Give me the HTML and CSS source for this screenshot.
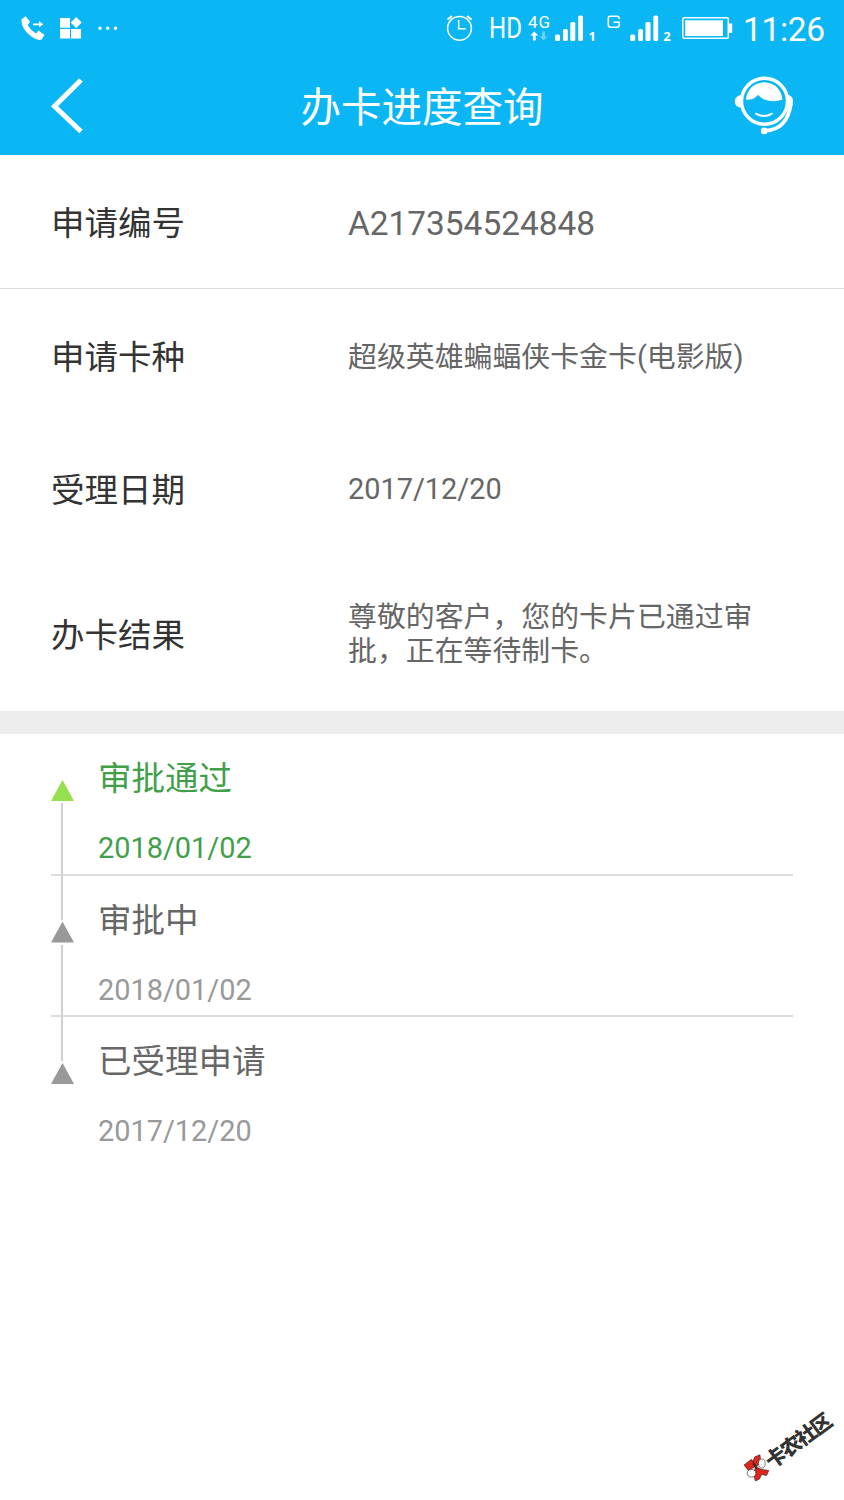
FILE: index.html
```html
<!DOCTYPE html>
<html lang="zh-CN">
<head>
<meta charset="utf-8">
<title>办卡进度查询</title>
<link rel="stylesheet" href="styles.css">
</head>
<body>
<header class="top">
  <div class="status">
    <svg class="status-left" width="130" height="56" viewBox="0 0 130 56" fill="#fff">
      <path d="M21.300 19.500L25.500 16.200L30 21.500L27.700 25.200Q31 30.500 36 33.500L38.500 30.500L44.500 35L41.500 39.500Q38 41 32 37Q21.500 30 21.300 19.500Z"/>
      <path d="M33 23.500h6v-2.500l4.200 3.300-4.200 3.300v-2.400h-6z"/>
      <path d="M60 18h10v9.700H60zM60 29h10v9.500H60zM71 29h10v9.500H71zM76.200 17l5.500 5.500-5.500 5.500-5.500-5.500z"/>
      <circle cx="100" cy="28.300" r="1.700"/><circle cx="107.700" cy="28.300" r="1.700"/><circle cx="115.500" cy="28.300" r="1.700"/>
    </svg>
    <svg class="status-right" width="404" height="56" viewBox="440 0 404 56" fill="#fff">
      <g fill="none" stroke="#fff" stroke-width="1.500">
        <circle cx="459.500" cy="28.300" r="11.900"/>
        <path d="M458.700 20v8.800h7"/>
        <path d="M447.500 19.500l4.500-3.500M471.500 19.500l-4.500-3.500" stroke-width="2"/>
      </g>
      <text class="st-hd" x="489" y="38.200" textLength="33" lengthAdjust="spacingAndGlyphs">HD</text>
      <text class="st-net" x="528" y="28" textLength="22">4G</text>
      <path d="M534.300 31.500l4 4h-2.600v5h-2.800v-5h-2.600z"/>
      <path d="M543.500 40.500l4-4h-2.600v-5h-2.800v5h-2.600z" opacity=".4"/>
      <g id="bars"><rect x="555" y="34.500" width="5" height="6.500" rx="1.500"/><rect x="563" y="29" width="4.800" height="12" rx="1.500"/><rect x="570.300" y="22" width="5" height="19" rx="1.500"/><rect x="578.200" y="15.500" width="4.800" height="25.500" rx="1.500"/></g>
      <text class="st-sim" x="588.500" y="41">1</text>
      <path d="M619.200 19v-.5q0-2.200-2.200-2.200h-6.500q-2.200 0-2.200 2.200v6.500q0 2.200 2.200 2.200h6.500q2.200 0 2.200-2.200v-2.800h-5.700" fill="none" stroke="#fff" stroke-width="1.600"/>
      <use href="#bars" x="75.200"/>
      <text class="st-sim" x="663.200" y="41">2</text>
      <rect x="682.800" y="17.800" width="45.500" height="20.500" rx="1.500" fill="none" stroke="#fff" stroke-width="1.500"/>
      <path d="M685.200 20.300h37.800v15.700h-37.800zM729 23.500h3.200v9.300H729z"/>
      <text class="st-time" x="743" y="41" textLength="82">11:26</text>
    </svg>
  </div>
  <nav class="nav">
    <svg class="back" width="36" height="58" viewBox="49 77 36 58"><path d="M81 80L54.500 106.300L81 131.500" fill="none" stroke="#fff" stroke-width="5"/></svg>
    <h1 class="title">办卡进度查询</h1>
    <svg class="service" width="62" height="60" viewBox="733 75.800 62 60" fill="none" stroke="#fff">
      <path d="M742 94.500Q734.800 95.500 734.800 101.300T742 107.500zM787 94.500q6 .5 6 6.500t-6 7z" fill="#fff" stroke="none"/>
      <circle cx="764.500" cy="101" r="23" stroke-width="3.400"/>
      <path d="M745.800 99.200Q748 84 763.500 82Q780 82.500 782.500 99.300Q774 103 763.500 99Q760 97 758 94.500Q753.500 100.500 745.800 99.200Z" fill="#fff" stroke="none"/>
      <path d="M756 113.500q8 4.700 15.800 0" stroke-width="2" stroke-linecap="round"/>
      <path d="M791 103Q787.500 129.500 765 130.500" stroke-width="3.700"/>
      <circle cx="764.200" cy="130.700" r="3.300" fill="#fff" stroke="none"/>
    </svg>
  </nav>
</header>
<main>
  <dl class="details">
    <div class="row row-first"><dt>申请编号</dt><dd class="number">A217354524848</dd></div>
    <div class="row"><dt>申请卡种</dt><dd>超级英雄蝙蝠侠卡金卡(电影版)</dd></div>
    <div class="row row-date"><dt>受理日期</dt><dd>2017/12/20</dd></div>
    <div class="row row-result"><dt>办卡结果</dt><dd>尊敬的客户，您的卡片已通过审批，正在等待制卡。</dd></div>
  </dl>
  <ol class="timeline">
    <li class="step done">
      <div class="track"><i class="stem-top"></i><i class="arrow"></i><i class="stem"></i></div>
      <div class="info"><p class="name">审批通过</p><p class="date">2018/01/02</p></div>
    </li>
    <li class="step">
      <div class="track"><i class="stem-top"></i><i class="arrow"></i><i class="stem"></i></div>
      <div class="info"><p class="name">审批中</p><p class="date">2018/01/02</p></div>
    </li>
    <li class="step">
      <div class="track"><i class="stem-top"></i><i class="arrow"></i><i class="stem"></i></div>
      <div class="info"><p class="name">已受理申请</p><p class="date">2017/12/20</p></div>
    </li>
  </ol>
</main>
<svg class="watermark" width="114" height="110" viewBox="730 1390 114 110">
  <g stroke="#222" stroke-width=".6">
    <path d="M744 1465L751.500 1459.300L756 1466L748.500 1470.800ZM752.800 1461.500L754.800 1456.800L760 1454.800L760.500 1461L756.500 1467ZM755.500 1466.500L761 1469.300L768.800 1470.500L766.500 1475.500L761.500 1474.500L759.500 1479L755.500 1481L753.500 1475Z" fill="#e0261c"/>
    <ellipse cx="761.800" cy="1463.500" rx="3.400" ry="4.600" fill="#fff"/>
    <ellipse cx="751.500" cy="1473.300" rx="4.300" ry="3.700" fill="#fff"/>
    <path d="M753 1463.500l4 6" stroke-width="1.300"/>
  </g>
  <text class="mark" transform="translate(772 1469.500) rotate(-36.500)" textLength="77">卡农社区</text>
</svg>
</body>
</html>
```
FILE: styles.css
```css
* { box-sizing: border-box; }

body {
  margin: 0;
  min-height: 1500px;
  background: #fff;
  color: #666;
  font-family: Roboto, "Noto Sans CJK SC", sans-serif;
}

h1, dl, dd, ol, p { margin: 0; padding: 0; }
svg { display: block; }

.top { height: 155px; background: #0ab6f4; color: #fff; }
.status { display: flex; justify-content: space-between; height: 56px; }
.st-hd { font-size: 29px; }
.st-net { font-size: 17px; }
.st-sim { font: 700 13px "Noto Sans", sans-serif; }
.st-time { font-size: 33.5px; }

.nav {
  display: grid;
  grid-template-columns: 62px 1fr 62px;
  align-items: center;
  height: 99px;
  padding: 0 49px;
}
.service { justify-self: end; }
.title {
  padding-top: 5px;
  font-size: 40.5px;
  font-weight: 400;
  line-height: 60px;
  text-align: center;
}

.details { border-bottom: 23px solid #ededed; }
.row {
  display: grid;
  grid-template-columns: 297px 415px;
  align-items: center;
  height: 133px;
  padding-left: 51px;
}
.row-first { height: 134px; border-bottom: 1px solid #dedede; }
.row-result { height: 156px; }
.row dt { padding-top: 5px; color: #333; font-size: 33.5px; line-height: 48px; }
.row dd { padding-top: 2px; font-size: 28.9px; line-height: 34px; }
.row-date dd { padding-top: 0; }
.row .number { padding-top: 4px; font-size: 33.4px; }

.timeline { list-style: none; padding: 0 51px; }
.step { display: flex; height: 141.5px; border-bottom: 2px solid #dcdcdc; }
.step:last-child { border-bottom: 0; }
.track { display: flex; flex-direction: column; align-items: flex-start; width: 23px; height: 141.5px; }
.stem-top { width: 2px; height: 44px; margin: 0 0 2px 10px; background: #d0d0d0; }
.step:first-child .stem-top, .step:last-child .stem { visibility: hidden; }
.arrow { width: 23px; height: 21px; background: #999; clip-path: polygon(50% 0, 100% 100%, 0 100%); }
.stem { flex: 1; width: 2px; margin: 2px 0 0 10px; background: #d0d0d0; }
.info { padding: 21px 0 0 24px; }
.name { font-size: 33.5px; line-height: 48px; }
.date { margin-top: 28px; color: #999; font-size: 28.9px; line-height: 34px; }
.done .arrow { background: #95e04c; }
.done .name, .done .date { color: #419f4a; }

.watermark { position: absolute; left: 730px; top: 1390px; }
.mark { font: 900 20.5px "Noto Sans CJK SC", sans-serif; fill: #333; }
```
